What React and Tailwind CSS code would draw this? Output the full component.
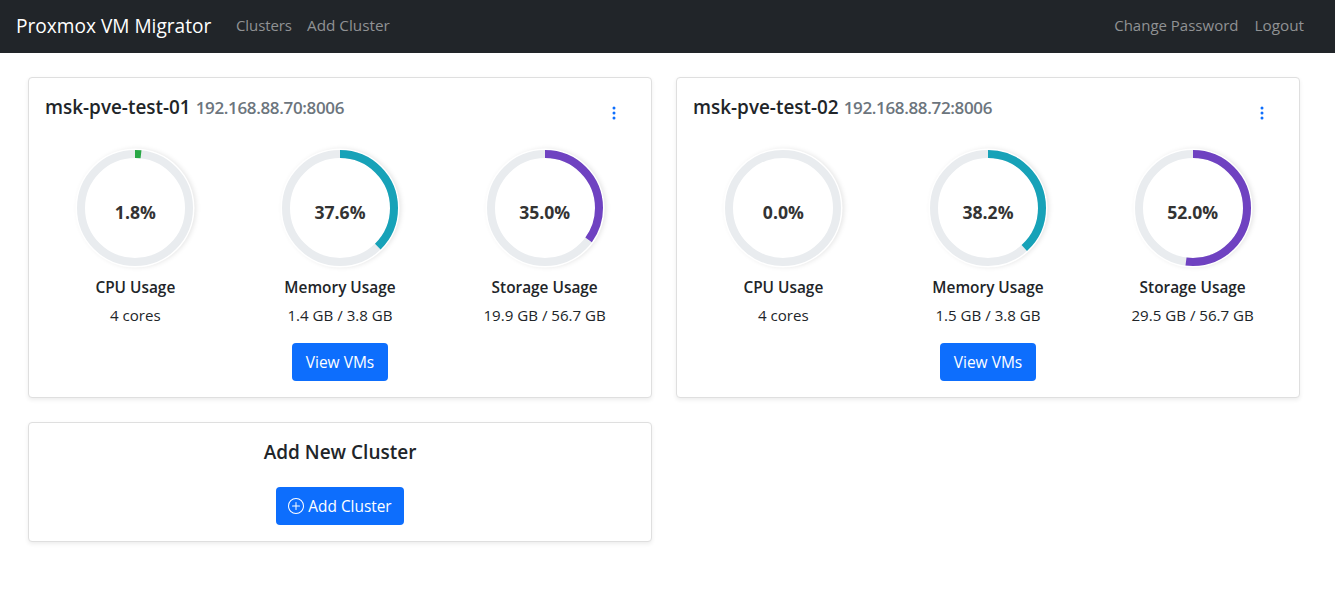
const CLUSTERS = [
  {
    name: 'msk-pve-test-01',
    host: '192.168.88.70:8006',
    stats: [
      { label: 'CPU Usage', value: 1.8, detail: '4 cores', color: '#28a745' },
      { label: 'Memory Usage', value: 37.6, detail: '1.4 GB / 3.8 GB', color: '#17a2b8' },
      { label: 'Storage Usage', value: 35.0, detail: '19.9 GB / 56.7 GB', color: '#6f42c1' },
    ],
  },
  {
    name: 'msk-pve-test-02',
    host: '192.168.88.72:8006',
    stats: [
      { label: 'CPU Usage', value: 0, detail: '4 cores', color: '#28a745' },
      { label: 'Memory Usage', value: 38.2, detail: '1.5 GB / 3.8 GB', color: '#17a2b8' },
      { label: 'Storage Usage', value: 52.0, detail: '29.5 GB / 56.7 GB', color: '#6f42c1' },
    ],
  },
];

const CIRCUMFERENCE = 2 * Math.PI * 54;

function Ring({ value, color }) {
  const length = (value / 100) * CIRCUMFERENCE;
  return (
    <div className="grid size-[120px] place-items-center">
      <svg
        viewBox="0 0 120 120"
        className="col-start-1 row-start-1 size-[120px] rounded-full [filter:drop-shadow(2px_0px_2px_rgba(0,0,0,0.09))]"
      >
        <circle cx="60" cy="60" r="59.5" fill="#fff" />
        <circle cx="60" cy="60" r="54" fill="none" stroke="#e9ecef" strokeWidth="8" />
        {value > 0 && (
          <circle
            cx="60"
            cy="60"
            r="54"
            fill="none"
            stroke={color}
            strokeWidth="8"
            strokeDasharray={`${length} ${CIRCUMFERENCE}`}
            transform="rotate(-90 60 60)"
          />
        )}
      </svg>
      <span className="z-10 col-start-1 row-start-1 pt-[7px] text-[17.6px] leading-6 font-bold text-[#333]">
        {value.toFixed(1)}%
      </span>
    </div>
  );
}

function Stat({ stat }) {
  return (
    <div className="flex flex-col items-center">
      <Ring value={stat.value} color={stat.color} />
      <h6 className="mt-2.5 text-[15.4px] leading-[19px] font-semibold">{stat.label}</h6>
      <p className="mt-1.5 mb-px text-[15.1px] leading-6">{stat.detail}</p>
    </div>
  );
}

function ClusterCard({ cluster }) {
  return (
    <section className="flex h-[321px] flex-col rounded border border-[#dfdfdf] bg-white px-4 pt-4 shadow-[0_2px_4px_rgba(0,0,0,0.075)]">
      <div className="flex h-[54px] items-start justify-between">
        <h5 className="flex items-baseline gap-[5px] pt-px leading-6">
          <span className="text-[18.9px] font-semibold">{cluster.name}</span>
          <span className="text-[17px] font-semibold tracking-[-0.35px] text-[#6c757d]">{cluster.host}</span>
        </h5>
        <button className="mt-[11px] mr-[13px]" aria-label="Cluster menu">
          <svg viewBox="0 0 16 16" className="size-4" fill="#0d6efd">
            <circle cx="8" cy="3" r="1.5" />
            <circle cx="8" cy="8" r="1.5" />
            <circle cx="8" cy="13" r="1.5" />
          </svg>
        </button>
      </div>
      <div className="-mx-3 grid grid-cols-3">
        {cluster.stats.map((stat) => (
          <Stat key={stat.label} stat={stat} />
        ))}
      </div>
      <button className="mt-[15px] h-[38px] w-24 self-center rounded bg-[#0d6efd] pt-0.5 text-[15.5px] text-white">
        View VMs
      </button>
    </section>
  );
}

export default function App() {
  return (
    <div className="min-h-[591px] bg-white font-['Open_Sans','Noto_Sans',sans-serif] text-[#212529]">
      <nav className="flex h-[53px] items-center bg-[#212529] pr-[31px] pb-[3px] pl-4 text-[15px] text-[#909294]">
        <a className="w-[220px] pt-0.5 text-[19.1px] text-white">Proxmox VM Migrator</a>
        <a className="w-[71px] tracking-[-0.1px]">Clusters</a>
        <a className="text-[15.3px]">Add Cluster</a>
        <a className="ml-auto">Change Password</a>
        <a className="ml-4 text-[15.3px]">Logout</a>
      </nav>
      <main className="grid grid-cols-[624px_624px] items-start gap-6 pt-6 pl-7">
        {CLUSTERS.map((cluster) => (
          <ClusterCard key={cluster.name} cluster={cluster} />
        ))}
        <section className="flex h-[120px] flex-col items-center rounded border border-[#dfdfdf] bg-white pt-4 shadow-[0_2px_4px_rgba(0,0,0,0.075)]">
          <h5 className="pt-px text-[19px] leading-6 font-semibold">Add New Cluster</h5>
          <button className="mt-[23px] flex h-[38px] w-32 items-center justify-center gap-1 rounded bg-[#0d6efd] text-[15.4px] text-white">
            <svg viewBox="0 0 16 16" className="size-4" fill="currentColor">
              <path d="M8 15A7 7 0 1 1 8 1a7 7 0 0 1 0 14m0 1A8 8 0 1 0 8 0a8 8 0 0 0 0 16" />
              <path d="M8 4a.5.5 0 0 1 .5.5v3h3a.5.5 0 0 1 0 1h-3v3a.5.5 0 0 1-1 0v-3h-3a.5.5 0 0 1 0-1h3v-3A.5.5 0 0 1 8 4" />
            </svg>
            <span className="pt-0.5">Add Cluster</span>
          </button>
        </section>
      </main>
    </div>
  );
}
